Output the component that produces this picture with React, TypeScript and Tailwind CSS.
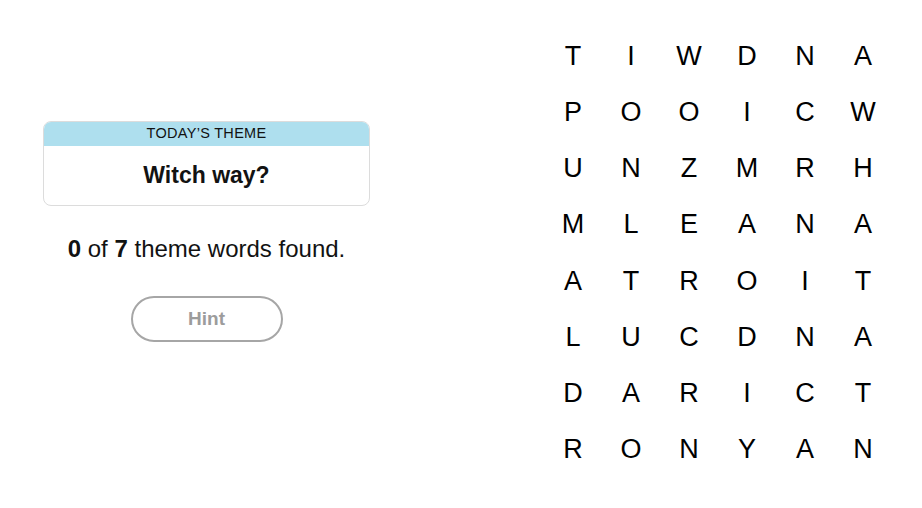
const LETTERS = [
  'TIWDNA',
  'POOICW',
  'UNZMRH',
  'MLEANA',
  'ATROIT',
  'LUCDNA',
  'DARICT',
  'RONYAN',
];

export default function App() {
  return (
    <div className="w-[922px] h-[508px] bg-white flex font-['Liberation_Sans',Arial,sans-serif] text-black">
      {/* Left: theme + progress */}
      <div className="w-[413px] flex flex-col items-center pt-[121px]">
        <div className="w-[327px] rounded-lg border border-[#dcdcdc] overflow-hidden">
          <div className="h-[24px] bg-[#aedfee] flex items-center justify-center text-[14.5px] tracking-[0.3px] text-[#121212]">
            TODAY’S THEME
          </div>
          <div className="h-[59px] flex items-center justify-center text-[23px] font-bold text-[#121212]">
            Witch way?
          </div>
        </div>
        <p className="mt-[29px] text-[24px] leading-[28px] text-[#121212]">
          <b>0</b> of <b>7</b> theme words found.
        </p>
        <button className="mt-[33px] w-[152px] h-[46px] rounded-full border-2 border-[#a6a6a6] text-[19px] font-bold text-[#9c9c9c]">
          Hint
        </button>
      </div>

      {/* Right: letter grid */}
      <div className="pl-[131px] pt-[28px]">
        <div className="grid grid-cols-[repeat(6,58px)] grid-rows-[repeat(8,56.2px)]">
          {LETTERS.flatMap((row, r) =>
            row.split('').map((ch, c) => (
              <div key={`${r}-${c}`} className="flex items-center justify-center text-[27px]">
                {ch}
              </div>
            )),
          )}
        </div>
      </div>
    </div>
  );
}
